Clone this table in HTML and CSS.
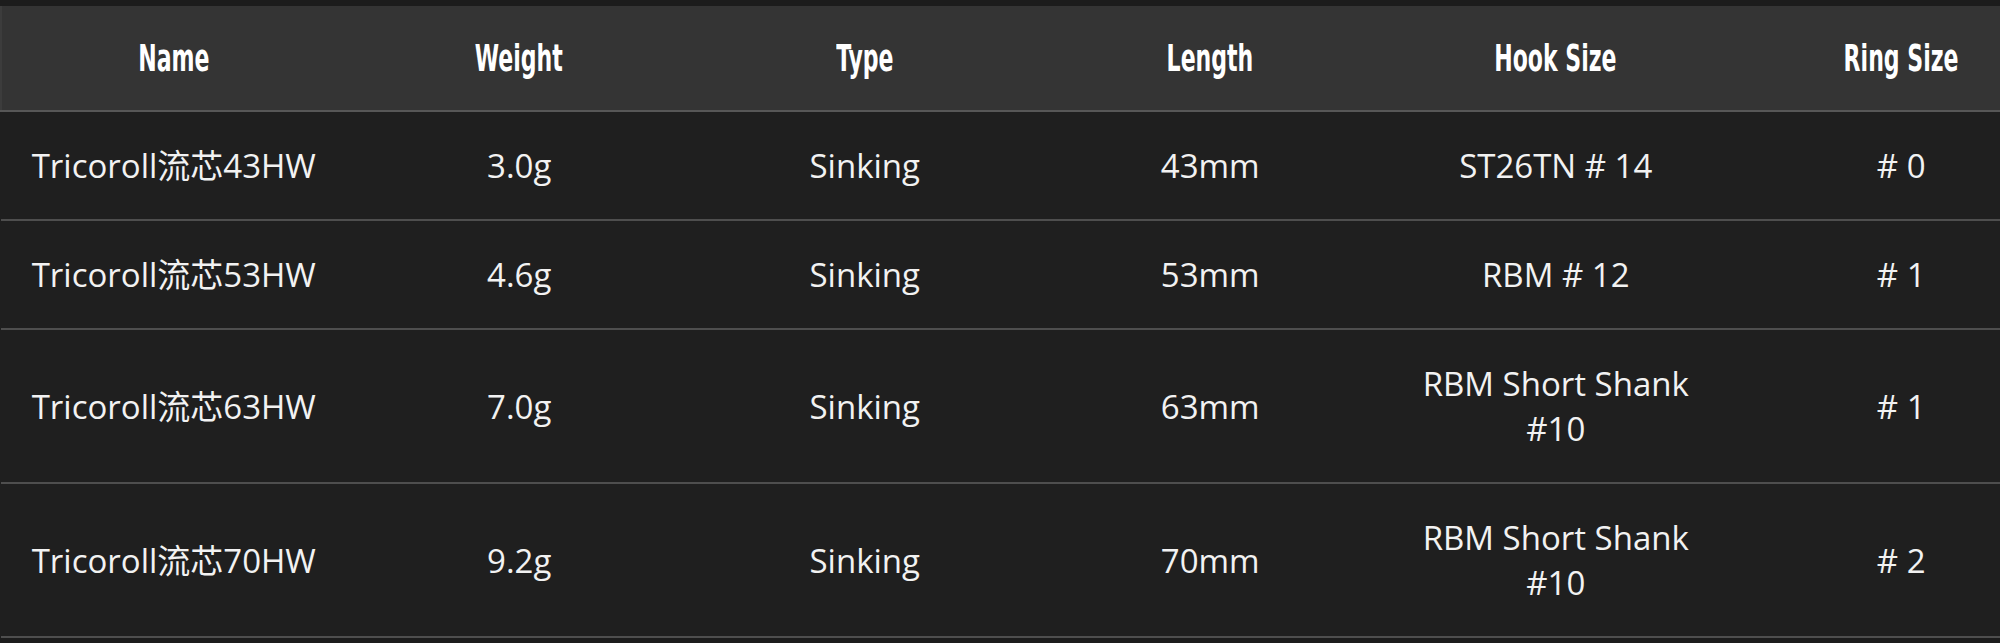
FILE: index.html
```html
<!DOCTYPE html>
<html lang="en">
<head>
<meta charset="utf-8">
<title>Tricoroll 流芯 specs</title>
<link rel="stylesheet" href="styles.css">
</head>
<body>
<div class="wrap">
<table class="spec">
  <thead>
    <tr>
      <th><span class="hd">Name</span></th>
      <th><span class="hd">Weight</span></th>
      <th><span class="hd">Type</span></th>
      <th><span class="hd">Length</span></th>
      <th><span class="hd">Hook Size</span></th>
      <th><span class="hd">Ring Size</span></th>
    </tr>
  </thead>
  <tbody>
    <tr>
      <td>Tricoroll流芯43HW</td>
      <td>3.0g</td>
      <td>Sinking</td>
      <td>43mm</td>
      <td>ST26TN # 14</td>
      <td># 0</td>
    </tr>
    <tr>
      <td>Tricoroll流芯53HW</td>
      <td>4.6g</td>
      <td>Sinking</td>
      <td>53mm</td>
      <td>RBM # 12</td>
      <td># 1</td>
    </tr>
    <tr>
      <td>Tricoroll流芯63HW</td>
      <td>7.0g</td>
      <td>Sinking</td>
      <td>63mm</td>
      <td>RBM Short Shank<br>#10</td>
      <td># 1</td>
    </tr>
    <tr>
      <td>Tricoroll流芯70HW</td>
      <td>9.2g</td>
      <td>Sinking</td>
      <td>70mm</td>
      <td>RBM Short Shank<br>#10</td>
      <td># 2</td>
    </tr>
  </tbody>
</table>
</div>
</body>
</html>
```
FILE: styles.css
```css
html, body {
  margin: 0;
  padding: 0;
  background: #1c1c1c;
}
body {
  overflow: hidden;
}
.wrap {
  width: 100%;
  overflow: hidden;
  padding-top: 6px;
}
.spec {
  width: 2074px;
  table-layout: fixed;
  border-collapse: collapse;
  background: #1f1f1f;
  color: #f2f2f2;
  font-family: "Open Sans", "Noto Sans CJK SC", sans-serif;
}
.spec th {
  background: #343434;
  height: 104px;
  padding: 0 10px;
  border-bottom: 2px solid #575757;
  border-left: 2px solid #3c3c3c;
  text-align: center;
  vertical-align: middle;
  color: #ffffff;
  font-family: "DejaVu Sans Condensed", "DejaVu Sans", sans-serif;
  font-weight: bold;
  font-size: 35px;
  line-height: 45px;
}
.spec th + th {
  border-left: none;
}
.hd {
  display: inline-block;
  transform: scale(0.7, 1.06);
  transform-origin: center;
  white-space: nowrap;
}
.spec td {
  padding: 31px 10px;
  border-bottom: 2px solid #4e4e4e;
  text-align: center;
  vertical-align: middle;
  font-size: 33px;
  line-height: 45px;
}
```
